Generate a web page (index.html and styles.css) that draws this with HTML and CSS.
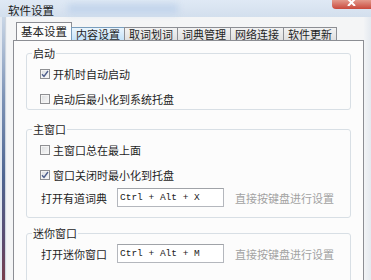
FILE: index.html
```html
<!DOCTYPE html>
<html lang="zh-CN">
<head>
    <meta charset="utf-8" />
    <title>软件设置</title>
    <link rel="stylesheet" href="styles.css">
</head>
<body>
    <div class="window">
        <div class="titlebar">
            <span class="title">软件设置</span>
            <span class="smear"></span>
            <span class="close"><svg width="9" height="6" viewBox="0 0 9 6"><path d="M1 -1 L8 6 M8 -1 L1 6" stroke="#fff" stroke-width="2"/></svg></span>
        </div>

        <div class="frame">
            <div class="edge-left"></div>

            <div class="body">
                <ul class="tabs">
                    <li class="tab active">基本设置</li>
                    <li class="tab hover">内容设置</li>
                    <li class="tab">取词划词</li>
                    <li class="tab">词典管理</li>
                    <li class="tab">网络连接</li>
                    <li class="tab">软件更新</li>
                </ul>

                <div class="panel">
                    <!-- 启动 -->
                    <fieldset class="group group-start">
                        <legend>启动</legend>
                        <div class="rows">
                            <label class="check"><span class="box"><svg width="8" height="8" viewBox="0 0 8 8"><path d="M1 4.2 L3 6.4 L7 1" fill="none" stroke="#4d5f8c" stroke-width="1.4"/></svg></span>开机时自动启动</label>
                            <label class="check"><span class="box"></span>启动后最小化到系统托盘</label>
                        </div>
                    </fieldset>

                    <!-- 主窗口 -->
                    <fieldset class="group group-main">
                        <legend>主窗口</legend>
                        <div class="rows">
                            <label class="check"><span class="box"></span>主窗口总在最上面</label>
                            <label class="check"><span class="box"><svg width="8" height="8" viewBox="0 0 8 8"><path d="M1 4.2 L3 6.4 L7 1" fill="none" stroke="#4d5f8c" stroke-width="1.4"/></svg></span>窗口关闭时最小化到托盘</label>
                            <div class="field">
                                <span class="field-label">打开有道词典</span>
                                <input class="hotkey" type="text" value="Ctrl + Alt + X" />
                                <span class="hint">直接按键盘进行设置</span>
                            </div>
                        </div>
                    </fieldset>

                    <!-- 迷你窗口 -->
                    <fieldset class="group group-mini">
                        <legend>迷你窗口</legend>
                        <div class="rows">
                            <div class="field">
                                <span class="field-label">打开迷你窗口</span>
                                <input class="hotkey" type="text" value="Ctrl + Alt + M" />
                                <span class="hint">直接按键盘进行设置</span>
                            </div>
                        </div>
                    </fieldset>
                </div>
            </div>

            <div class="edge-right"></div>
        </div>
    </div>
</body>
</html>
```

FILE: styles.css
```css
* {
    padding: 0;
    margin: 0;
    box-sizing: border-box;
    font-family: "Noto Sans CJK SC", "Noto Sans", sans-serif;
}

body {
    width: 371px;
    height: 280px;
    overflow: hidden;
    background: #f4f5f6;
    color: #1e1e1e;
    font-size: 11px;
}

.window {
    display: flex;
    flex-direction: column;
    height: 280px;
}

/* title bar */
.titlebar {
    display: flex;
    align-items: flex-start;
    height: 20px;
    background: linear-gradient(#dfe9f5, #d3dfed);
}

    .titlebar .title {
        margin: 3px 0 0 8px;
        font-size: 11.5px;
        line-height: 14px;
        color: #1a1a1a;
    }

    .titlebar .smear {
        width: 110px;
        height: 10px;
        margin: 4px 0 0 14px;
        background: #c3d5ec;
        filter: blur(3px);
    }

    .titlebar .close {
        display: flex;
        justify-content: center;
        align-items: flex-start;
        margin-left: auto;
        width: 39px;
        height: 9px;
        border-radius: 0 0 0 4px;
        background: linear-gradient(#e39a8c, #c9493c);
    }

/* window frame */
.frame {
    display: flex;
    flex: 1;
}

.edge-left {
    width: 7px;
    background:
        linear-gradient(to right, #e3e9f1 0 2px, transparent 2px 5px, #cfd6df 5px 6px, #eef1f4 6px),
        linear-gradient(#c9d6e6, #7d93b6 30%, #4e6591 60%, #5b4a6e 85%, #7c3b47);
}

.edge-right {
    width: 7px;
    background: linear-gradient(to right, #f2f4f6, #e4e9ef);
}

.body {
    flex: 1;
    padding-top: 5px;
    display: flex;
    flex-direction: column;
}

/* tabs */
.tabs {
    display: flex;
    align-items: flex-end;
    height: 18px;
    margin-left: 9px;
    list-style: none;
}

    .tabs .tab {
        height: 13px;
        padding: 0 4px;
        margin-left: -1px;
        border: 1px solid #8c8e94;
        border-bottom: none;
        background: linear-gradient(#f2f2f2, #e0e0e0);
        font-size: 11px;
        line-height: 12px;
        white-space: nowrap;
    }

    .tabs .tab.hover {
        background: linear-gradient(#eaf5fd, #c4e2f9);
        border-color: #7a9ebd;
    }

    .tabs .tab.active {
        height: 19px;
        margin-left: 0;
        margin-bottom: -1px;
        background: #fcfcfc;
        line-height: 16px;
        font-size: 11.5px;
    }

.panel {
    flex: 1;
    margin-left: 6px;
    padding: 6px 12px 0 12px;
    border: 1px solid #8c8e94;
    border-bottom: none;
    background: #fcfcfc;
}

/* group boxes */
.group {
    border: 1px solid #d8dfe5;
    border-radius: 3px;
    padding: 0;
}

    .group legend {
        margin-left: 5px;
        padding: 0 1px;
        font-size: 11px;
        line-height: 12px;
    }

    .group .rows {
        display: flex;
        flex-direction: column;
        padding-left: 13px;
    }

.group-start .rows {
    padding-top: 6px;
    padding-bottom: 2px;
    gap: 8px;
}

.group-main {
    margin-top: 13px;
}

    .group-main .rows {
        padding-top: 6px;
        padding-bottom: 10px;
        gap: 8px;
    }

        .group-main .rows .field {
            margin-top: -3px;
        }

.group-mini {
    margin-top: 9px;
}

    .group-mini .rows {
        padding-top: 5px;
        padding-bottom: 20px;
    }

/* checkbox rows */
.check {
    display: flex;
    align-items: center;
    gap: 3px;
    height: 17px;
    font-size: 11px;
}

    .check .box {
        display: flex;
        align-items: center;
        justify-content: center;
        width: 10px;
        height: 10px;
        border: 1px solid #8f9093;
        background: linear-gradient(135deg, #dadcde, #fafafa);
        box-shadow: inset 0 0 0 1px #f4f4f4;
    }

/* hotkey rows */
.field {
    display: flex;
    align-items: center;
    height: 19px;
}

    .field .field-label {
        width: 77px;
        padding-left: 1px;
        font-size: 11px;
    }

    .field .hotkey {
        width: 107px;
        height: 19px;
        padding-left: 2px;
        border: 1px solid #b4b7bd;
        border-top-color: #a0a3a8;
        background: #fff;
        font: 9.5px "Liberation Mono", monospace;
        color: #222;
        outline: none;
    }

    .field .hint {
        margin-left: 11px;
        color: #a2a2a2;
        font-size: 11px;
    }
```
